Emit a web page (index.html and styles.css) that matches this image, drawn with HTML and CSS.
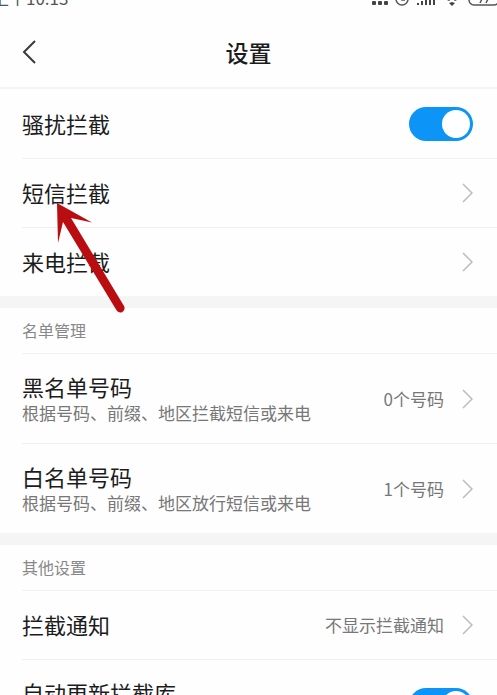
FILE: index.html
```html
<!DOCTYPE html>
<html lang="zh-CN">
<head>
  <meta charset="UTF-8" />
  <meta name="viewport" content="width=device-width, initial-scale=1" />
  <title>设置</title>
  <link rel="stylesheet" href="styles.css">
</head>
<body>
  <div class="status-bar">
    <span class="status-time">上午10:13</span>
    <svg class="status-icons" width="128" height="16" viewBox="0 0 128 16" aria-hidden="true">
      <g fill="#444">
        <rect x="3" y="11" width="4" height="4" rx="1" />
        <rect x="9" y="11" width="4" height="4" rx="1" />
        <rect x="15" y="11" width="4" height="4" rx="1" />
        <path d="M48 13h2v2h-2zM52 11h2v4h-2zM56 9h2v6h-2zM60 7h2v8h-2zM64 5h2v10h-2z" />
        <path d="M78 10q5-5 10 0l-2 1q-3-3-6 0zM83 12l3 1-3 3-3-3z" />
      </g>
      <g fill="none" stroke="#555" stroke-width="1.5">
        <circle cx="33" cy="9" r="6" />
        <path d="M33 5v5h3" />
        <rect x="100" y="3" width="30" height="12" rx="5" />
        <path d="M111 13l3-6M117 13l3-6" />
      </g>
    </svg>
  </div>

  <header class="header">
    <a href="#" class="back" aria-label="返回">
      <svg width="14" height="24" viewBox="0 0 14 24" aria-hidden="true"><path d="M13 1L2 12l11 11" /></svg>
    </a>
    <h1>设置</h1>
  </header>

  <main>
    <section class="group">
      <div class="row">
        <label class="row-title" for="harass">骚扰拦截</label>
        <input type="checkbox" class="switch" id="harass" role="switch" checked />
      </div>
      <a href="#" class="row has-pointer">
        <span class="row-title">短信拦截</span>
        <svg class="chevron" viewBox="0 0 11 20" aria-hidden="true"><path d="M1 1l9 9-9 9" /></svg>
        <svg class="pointer" width="70" height="112" viewBox="0 0 70 112" aria-hidden="true">
          <path d="M1 1L36 20.500L15 16L68 104A4.300 4.300 0 0 1 60.500 108.300L7 20L2 41z" />
        </svg>
      </a>
      <a href="#" class="row">
        <span class="row-title">来电拦截</span>
        <svg class="chevron" viewBox="0 0 11 20" aria-hidden="true"><path d="M1 1l9 9-9 9" /></svg>
      </a>
    </section>

    <section class="group">
      <h2>名单管理</h2>
      <a href="#" class="row row-tall">
        <span class="row-text">
          <span class="row-title">黑名单号码</span>
          <span class="row-desc">根据号码、前缀、地区拦截短信或来电</span>
        </span>
        <span class="row-value">0个号码</span>
        <svg class="chevron" viewBox="0 0 11 20" aria-hidden="true"><path d="M1 1l9 9-9 9" /></svg>
      </a>
      <a href="#" class="row row-tall">
        <span class="row-text">
          <span class="row-title">白名单号码</span>
          <span class="row-desc">根据号码、前缀、地区放行短信或来电</span>
        </span>
        <span class="row-value">1个号码</span>
        <svg class="chevron" viewBox="0 0 11 20" aria-hidden="true"><path d="M1 1l9 9-9 9" /></svg>
      </a>
    </section>

    <section class="group">
      <h2>其他设置</h2>
      <a href="#" class="row">
        <span class="row-title">拦截通知</span>
        <span class="row-value">不显示拦截通知</span>
        <svg class="chevron" viewBox="0 0 11 20" aria-hidden="true"><path d="M1 1l9 9-9 9" /></svg>
      </a>
      <div class="row row-tall">
        <span class="row-text">
          <label class="row-title" for="update">自动更新拦截库</label>
        </span>
        <input type="checkbox" class="switch" id="update" role="switch" checked />
      </div>
    </section>
  </main>
</body>
</html>
```
FILE: styles.css
```css
* {
  box-sizing: border-box;
}
body {
  margin: 0;
  height: 100vh;
  overflow: hidden;
  background: #fefefe;
  color: #1c1c1c;
  font-family: "Noto Sans CJK SC", sans-serif;
}
a {
  color: inherit;
  text-decoration: none;
}

.status-bar {
  display: flex;
  justify-content: space-between;
  align-items: flex-end;
  height: 6px;
  overflow: hidden;
}
.status-time {
  margin-left: -8px;
  font-size: 17px;
  line-height: 16px;
  color: #555;
}
.status-icons {
  flex: none;
}

.header {
  display: grid;
  grid-template-columns: 48px 1fr 48px;
  align-items: center;
  height: 83px;
  padding-top: 10px;
  border-bottom: 2px solid #f5f5f5;
}
.back {
  display: flex;
  padding-left: 22px;
}
.back path {
  fill: none;
  stroke: #3a3a3a;
  stroke-width: 2;
}
h1 {
  margin: 0;
  font-size: 23px;
  font-weight: 500;
  line-height: 32px;
  text-align: center;
}

.group + .group {
  border-top: 12px solid #f5f5f5;
}
h2 {
  margin: 0 0 0 22px;
  font-size: 16px;
  font-weight: 400;
  line-height: 45px;
  color: #888;
}
.row {
  display: flex;
  align-items: center;
  min-height: 69px;
  margin-left: 22px;
  padding-right: 24px;
  border-top: 1px solid #f0f0f0;
}
.group:first-child .row:first-child {
  border-top: none;
}
.row-tall {
  min-height: 90px;
}
.row-text {
  display: flex;
  flex: 1;
  flex-direction: column;
  align-self: flex-start;
  padding-top: 18px;
}
.row-title {
  flex: 1;
  padding-bottom: 2px;
  font-size: 22px;
  line-height: 28px;
}
.row-desc {
  font-size: 17px;
  line-height: 22px;
  color: #777;
}
.row-value {
  padding-bottom: 1px;
  font-size: 17px;
  color: #777;
}
.chevron {
  flex: none;
  width: 11px;
  height: 20px;
  margin-left: 18px;
  fill: none;
  stroke: #bbb;
  stroke-width: 1.5;
}

.switch {
  appearance: none;
  display: flex;
  align-items: center;
  width: 64px;
  height: 34px;
  margin: 0;
  padding: 3px;
  border-radius: 17px;
  background: #ccc;
}
.switch::before {
  content: "";
  width: 28px;
  height: 28px;
  border-radius: 50%;
  background: #fff;
}
.switch:checked {
  justify-content: flex-end;
  background: #0d94f7;
}

/* red arrow laid over the rows */
.has-pointer {
  position: relative;
}
.pointer {
  position: absolute;
  top: 43px;
  left: 34px;
  fill: #b90d12;
  pointer-events: none;
}
```
